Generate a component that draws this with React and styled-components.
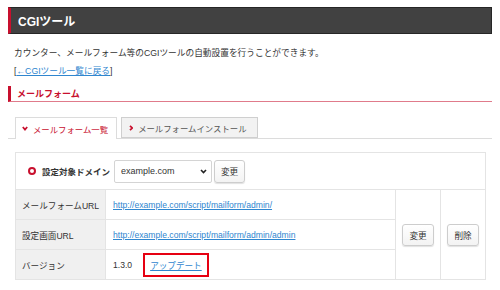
import React from "react";
import styled, { createGlobalStyle } from "styled-components";

const GlobalStyle = createGlobalStyle`
  html, body { margin: 0; padding: 0; background: #fff; }
  body {
    font-family: "Liberation Sans", "Noto Sans CJK JP", sans-serif;
    color: #333;
    font-size: 8.7px;
  }
  * { box-sizing: border-box; }
`;

const Page = styled.div`
  width: 500px;
  padding: 7px 8px 0;
`;

const HeaderBar = styled.h1`
  margin: 0;
  height: 27px;
  display: flex;
  align-items: center;
  background: #414141;
  border: 1px solid #262626;
  border-left: 3px solid #c8102e;
  color: #fff;
  font-size: 12px;
  font-weight: bold;
  padding-left: 7px;
`;

const Intro = styled.div`
  margin-top: 10px;
  padding: 0 6px;
  line-height: 18px;
`;

const Line = styled.p`
  margin: 0;
  height: 18px;
  white-space: nowrap;
`;

const Bracket = styled.span`
  color: #333;
`;

const Link = styled.a`
  color: #2f86cf;
  text-decoration: underline;
  cursor: pointer;
`;

const SectionTitle = styled.h2`
  margin: 6px 0 0;
  height: 16px;
  display: flex;
  align-items: center;
  border-left: 3px solid #c8102e;
  border-bottom: 1px solid #e07b8b;
  padding-left: 6px;
  color: #c8102e;
  font-size: 9px;
  font-weight: bold;
`;

const TabBar = styled.div`
  margin-top: 15px;
  display: flex;
  gap: 4px;
  padding-left: 7px;
  border-bottom: 1px solid #dcdcdc;
  height: 22px;
`;

const Tab = styled.div`
  height: ${(p) => (p.$active ? "22px" : "21px")};
  display: flex;
  align-items: center;
  gap: 5px;
  padding: ${(p) => (p.$active ? "0 8px 0 6px" : "0 10px 0 7px")};
  border: 1px solid ${(p) => (p.$active ? "#dcdcdc" : "#cfcfcf")};
  border-bottom: ${(p) => (p.$active ? "none" : "1px solid #cfcfcf")};
  background: ${(p) => (p.$active ? "#fff" : "#f2f2f2")};
  color: ${(p) => (p.$active ? "#c8102e" : "#555")};
  font-size: 8.4px;
  white-space: nowrap;
`;

const Content = styled.div`
  padding: 13px 7px 0;
`;

const Grid = styled.div`
  display: grid;
  grid-template-columns: 89px 289px 44px 44px;
  grid-template-rows: 36px 29px 29px 29px;
  gap: 1px;
  background: #e4e4e4;
  border: 1px solid #e4e4e4;
  width: 471px;
`;

const DomainRow = styled.div`
  grid-column: 1 / 5;
  background: #fff;
  display: flex;
  align-items: center;
  padding-left: 12px;
`;

const Ring = styled.span`
  width: 8px;
  height: 8px;
  border-radius: 50%;
  border: 2px solid #c8102e;
  margin-right: 6px;
`;

const DomainLabel = styled.span`
  font-weight: bold;
  font-size: 8.5px;
  margin-right: 4px;
  white-space: nowrap;
`;

const SelectWrap = styled.div`
  position: relative;
  width: 98px;
  height: 23px;
  margin-right: 2px;
`;

const Select = styled.select`
  appearance: none;
  -webkit-appearance: none;
  width: 100%;
  height: 100%;
  border: 1px solid #d4d4d4;
  border-radius: 2px;
  background: #fff;
  font-family: "Liberation Sans", sans-serif;
  font-size: 9px;
  color: #333;
  padding: 0 0 0 6px;
  outline: none;
`;

const SelectArrow = styled.svg`
  position: absolute;
  right: 5px;
  top: 9px;
  pointer-events: none;
`;

const Button = styled.button`
  width: ${(p) => p.$w || 32}px;
  height: ${(p) => p.$h || 22}px;
  padding: 0;
  border: 1px solid #cdcdcd;
  border-radius: 3px;
  background: linear-gradient(#ffffff, #f3f3f3);
  box-shadow: 0 1px 1px rgba(0, 0, 0, 0.12);
  font-family: "Liberation Sans", "Noto Sans CJK JP", sans-serif;
  font-size: 8.6px;
  color: #333;
`;

const LabelCell = styled.div`
  background: #f0f0f0;
  display: flex;
  align-items: center;
  padding-left: 6px;
  font-size: 8.6px;
  white-space: nowrap;
`;

const ValueCell = styled.div`
  background: #fff;
  display: flex;
  align-items: center;
  padding-left: 7px;
  font-size: 8.6px;
  white-space: nowrap;
`;

const ActionCell = styled.div`
  grid-row: 2 / 5;
  grid-column: ${(p) => p.$col};
  background: #fff;
  display: flex;
  align-items: center;
  justify-content: center;
`;

const Version = styled.span`
  margin-right: 11px;
`;

const Highlight = styled.span`
  display: flex;
  align-items: center;
  height: 24px;
  border: 2px solid #e60012;
  padding: 0 5px;
`;

const Chevron = ({ dir }) =>
  dir === "down" ? (
    <svg width="6" height="5" viewBox="0 0 6 5">
      <polyline points="0.8,1 3,3.6 5.2,1" fill="none" stroke="#c8102e" strokeWidth="1.7" />
    </svg>
  ) : (
    <svg width="4" height="6" viewBox="0 0 4 6">
      <polyline points="1,0.8 3.2,3 1,5.2" fill="none" stroke="#c8102e" strokeWidth="1.7" />
    </svg>
  );

export default function App() {
  return (
    <>
      <GlobalStyle />
      <Page>
        <HeaderBar>CGIツール</HeaderBar>
        <Intro>
          <Line>カウンター、メールフォーム等のCGIツールの自動設置を行うことができます。</Line>
          <Line>
            <Bracket>[</Bracket>
            <Link>←CGIツール一覧に戻る</Link>
            <Bracket>]</Bracket>
          </Line>
        </Intro>
        <SectionTitle>メールフォーム</SectionTitle>
        <TabBar>
          <Tab $active>
            <Chevron dir="down" />
            メールフォーム一覧
          </Tab>
          <Tab>
            <Chevron dir="right" />
            メールフォームインストール
          </Tab>
        </TabBar>
        <Content>
          <Grid>
            <DomainRow>
              <Ring />
              <DomainLabel>設定対象ドメイン</DomainLabel>
              <SelectWrap>
                <Select defaultValue="example.com">
                  <option value="example.com">example.com</option>
                </Select>
                <SelectArrow width="7" height="5" viewBox="0 0 7 5">
                  <polyline points="1,1 3.5,3.6 6,1" fill="none" stroke="#222" strokeWidth="1.6" />
                </SelectArrow>
              </SelectWrap>
              <Button $w={31} $h={23}>変更</Button>
            </DomainRow>

            <LabelCell>メールフォームURL</LabelCell>
            <ValueCell>
              <Link>http://example.com/script/mailform/admin/</Link>
            </ValueCell>
            <ActionCell $col={3}>
              <Button>変更</Button>
            </ActionCell>
            <ActionCell $col={4}>
              <Button>削除</Button>
            </ActionCell>

            <LabelCell>設定画面URL</LabelCell>
            <ValueCell>
              <Link>http://example.com/script/mailform/admin/admin</Link>
            </ValueCell>

            <LabelCell>バージョン</LabelCell>
            <ValueCell>
              <Version>1.3.0</Version>
              <Highlight>
                <Link>アップデート</Link>
              </Highlight>
            </ValueCell>
          </Grid>
        </Content>
      </Page>
    </>
  );
}
